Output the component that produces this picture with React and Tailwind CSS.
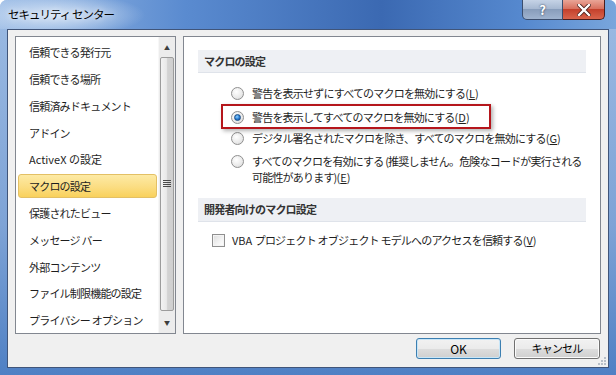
import React from 'react'

const items = [
  '信頼できる発行元',
  '信頼できる場所',
  '信頼済みドキュメント',
  'アドイン',
  'ActiveX の設定',
  'マクロの設定',
  '保護されたビュー',
  'メッセージ バー',
  '外部コンテンツ',
  'ファイル制限機能の設定',
  'プライバシー オプション',
]

const Radio = ({ checked }) => (
  <span className="relative shrink-0 w-[13px] h-[13px] rounded-full border border-[#8f8f8f] bg-[radial-gradient(circle_at_40%_35%,#ffffff_0%,#e9e9e9_60%,#d2d2d2_100%)] flex items-center justify-center">
    {checked && (
      <span className="w-[7px] h-[7px] rounded-full bg-[radial-gradient(circle_at_40%_35%,#8fd0ff_0%,#2a7fd4_50%,#0d4a94_100%)] border border-[#1b4d86]" />
    )}
  </span>
)

const Label = ({ text, k }) => (
  <span>
    {text}
    <span className="tracking-normal">
      (<span className="underline">{k}</span>)
    </span>
  </span>
)

export default function App() {
  return (
    <div
      className="w-[616px] h-[375px] flex flex-col overflow-hidden rounded-t-[7px] bg-[linear-gradient(180deg,#9cbbe3_0%,#7ea3d6_60%,#4f80c4_100%)] text-[11px] tracking-[-0.8px] text-[#1e1e1e]"
      style={{ fontFamily: '"Noto Sans CJK JP", "Noto Sans", sans-serif' }}
    >
      {/* Title bar */}
      <div className="h-[29px] shrink-0 flex bg-[radial-gradient(ellipse_90px_22px_at_55px_15px,#d6e4f5_0%,rgba(214,228,245,0)_100%),linear-gradient(90deg,#9dbde6_0%,#5a8bd0_30%,#3b69b2_62%,#5689cf_85%,#79a6dc_100%)]">
        <div className="pl-[8px] pt-[6px] text-[11.5px] tracking-[-1px] text-black [text-shadow:0_0_6px_#ffffff]">
          セキュリティ センター
        </div>
        <div className="ml-auto mr-[11px] flex h-[20px]">
          <div className="w-[41px] h-full rounded-bl-[5px] border border-t-0 border-[#3b4e6e] bg-[linear-gradient(180deg,#c5d3e6_0%,#a7b9d2_45%,#889dbb_50%,#9fb3cf_100%)] flex items-center justify-center text-white font-bold text-[13px] [text-shadow:0_0_2px_#1d2b44] tracking-normal">
            ?
          </div>
          <div className="w-[42px] h-full rounded-br-[5px] border border-t-0 border-l-0 border-[#4a1e1e] bg-[linear-gradient(180deg,#e9a597_0%,#d9715f_45%,#c4412c_50%,#d9644c_100%)] flex items-center justify-center">
            <svg width="14" height="12" viewBox="0 0 14 12">
              <path d="M2 1 L12 11 M12 1 L2 11" stroke="#4a1f1a" strokeWidth="4" strokeLinecap="square" />
              <path d="M2 1 L12 11 M12 1 L2 11" stroke="#ffffff" strokeWidth="2.4" strokeLinecap="square" />
            </svg>
          </div>
        </div>
      </div>

      {/* Client */}
      <div className="flex-1 mx-[7px] mb-[7px] border border-[#40557a] bg-[#f0f0f0] flex flex-col pt-[6px] pl-[7px] pr-[7px] relative">
        <div className="flex gap-[7px] h-[298px]">
          {/* List */}
          <div className="w-[161px] h-full border border-[#828790] bg-white flex">
            <div className="flex-1 pt-[2px]">
              {items.map((t, i) =>
                i === 5 ? (
                  <div key={t} className="h-[26.8px] flex items-center pl-[2px] pr-[1px]">
                    <div className="w-full h-[24px] rounded-[3px] border border-[#e3c065] bg-[linear-gradient(180deg,#fdeaa5_0%,#fbdd82_55%,#f9d15c_100%)] flex items-center pl-[10px]">
                      {t}
                    </div>
                  </div>
                ) : (
                  <div key={t} className={`h-[26.8px] flex items-center pl-[13px] ${i === 4 ? 'tracking-normal' : ''}`}>
                    {t}
                  </div>
                )
              )}
            </div>
            {/* Scrollbar */}
            <div className="w-[17px] h-full bg-[#ececec] flex flex-col border-l border-[#f7f7f7]">
              <div className="h-[20px] flex items-center justify-center text-[6px] text-[#3d3d3d] tracking-normal">▲</div>
              <div className="flex-1 mx-[1px] rounded-[2px] border border-[#9c9c9c] bg-[linear-gradient(90deg,#f3f3f3_0%,#e9e9e9_45%,#d3d3d3_55%,#cfcfcf_100%)] flex items-center justify-center">
                <svg width="8" height="8" viewBox="0 0 8 8">
                  <path d="M0 0.5 H8 M0 2.5 H8 M0 4.5 H8 M0 6.5 H8" stroke="#4a4a4a" strokeWidth="1" />
                </svg>
              </div>
              <div className="h-[22px] flex items-center justify-center text-[6px] text-[#3d3d3d] tracking-normal">▼</div>
            </div>
          </div>

          {/* Right panel */}
          <div className="flex-1 h-full border border-[#828790] bg-white relative flex flex-col">
            <div className="mt-[13px] mx-[14px] h-[23px] bg-[#eef0f4] border-b border-[#dfe3ea] flex items-center pl-[6px] font-bold text-[#333333]">
              マクロの設定
            </div>
            <div className="mt-[13px] pl-[47px] flex flex-col">
              <div className="h-[14px] flex items-center gap-[8px]">
                <Radio />
                <Label text="警告を表示せずにすべてのマクロを無効にする" k="L" />
              </div>
              <div className="mt-[10px] h-[14px] flex items-center gap-[8px]">
                <Radio checked />
                <Label text="警告を表示してすべてのマクロを無効にする" k="D" />
              </div>
              <div className="mt-[7px] h-[14px] flex items-center gap-[8px]">
                <Radio />
                <Label text="デジタル署名されたマクロを除き、すべてのマクロを無効にする" k="G" />
              </div>
              <div className="mt-[8px] flex gap-[8px]">
                <div className="h-[16px] flex items-center">
                  <Radio />
                </div>
                <div className="leading-[16px] w-[340px]">
                  <div>すべてのマクロを有効にする (推奨しません。危険なコードが実行される</div>
                  <div>
                    可能性があります)
                    <span className="tracking-normal">
                      (<span className="underline">E</span>)
                    </span>
                  </div>
                </div>
              </div>
            </div>
            <div className="mt-[13px] mx-[14px] h-[24px] bg-[#eef0f4] border-b border-[#dfe3ea] flex items-center pl-[6px] font-bold text-[#333333]">
              開発者向けのマクロ設定
            </div>
            <div className="mt-[12px] pl-[28px] h-[13px] flex items-center gap-[7px]">
              <span className="w-[13px] h-[13px] shrink-0 border border-[#8f8f8f] bg-[linear-gradient(135deg,#dcdcdc_0%,#f4f4f4_60%,#ffffff_100%)] shadow-[inset_0_0_0_1px_#f4f4f4]" />
              <span>
                <span className="tracking-normal">VBA </span>
                <Label text="プロジェクト オブジェクト モデルへのアクセスを信頼する" k="V" />
              </span>
            </div>

            {/* red highlight */}
            <div className="absolute left-[37px] top-[67px] w-[270px] h-[25px] border-2 border-[#b5161c] shadow-[2px_2px_4px_rgba(0,0,0,0.3)]" />
          </div>
        </div>

        {/* Buttons */}
        <div className="mt-[4px] flex justify-end gap-[13px] pr-[1px]">
          <button className="w-[85px] h-[21px] rounded-[3px] border border-[#3c7fb1] bg-[linear-gradient(180deg,#f2f2f2_0%,#ebebeb_50%,#dddddd_51%,#cfcfcf_100%)] shadow-[inset_0_0_0_1px_#c8e6f8] text-[12px] text-black tracking-normal">
            OK
          </button>
          <button className="w-[86px] h-[21px] rounded-[3px] border border-[#707070] bg-[linear-gradient(180deg,#f2f2f2_0%,#ebebeb_50%,#dddddd_51%,#cfcfcf_100%)] shadow-[inset_0_0_0_1px_#fbfbfb] text-[11px] text-black">
            キャンセル
          </button>
        </div>

        {/* size grip */}
        <svg className="absolute right-[1px] bottom-[1px]" width="10" height="10" viewBox="0 0 10 10">
          <g fill="#b8bfc8">
            <rect x="7" y="1" width="2" height="2" />
            <rect x="4" y="4" width="2" height="2" />
            <rect x="7" y="4" width="2" height="2" />
            <rect x="1" y="7" width="2" height="2" />
            <rect x="4" y="7" width="2" height="2" />
            <rect x="7" y="7" width="2" height="2" />
          </g>
        </svg>
      </div>
    </div>
  )
}
